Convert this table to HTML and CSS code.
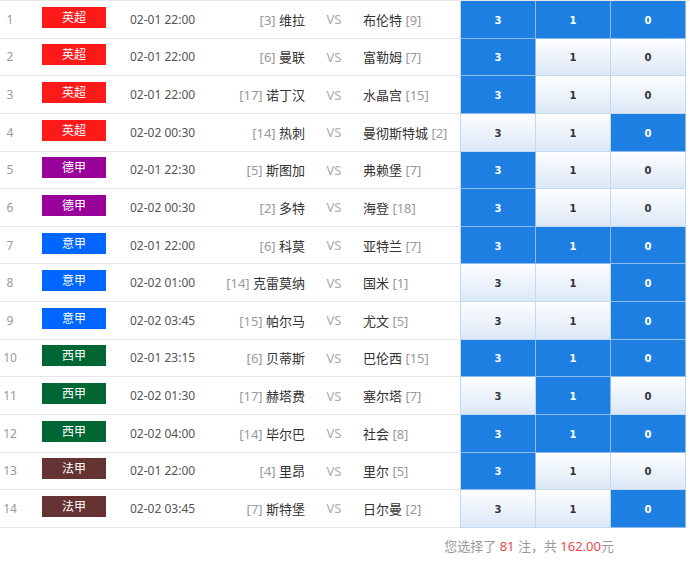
FILE: index.html
```html
<!DOCTYPE html>
<html lang="zh">
<head>
<meta charset="utf-8">
<title>选择</title>
<link rel="stylesheet" href="styles.css">
</head>
<body>
<div class="list">
  <div class="row"><div class="info"><span class="idx">1</span><span class="lg"><span class="badge yc">英超</span></span><span class="time">02-01 22:00</span><span class="home"><em>[3]</em> 维拉</span><span class="vs">VS</span><span class="away">布伦特 <em>[9]</em></span></div><div class="odds"><span class="c on">3</span><span class="c on">1</span><span class="c on">0</span></div></div>
  <div class="row"><div class="info"><span class="idx">2</span><span class="lg"><span class="badge yc">英超</span></span><span class="time">02-01 22:00</span><span class="home"><em>[6]</em> 曼联</span><span class="vs">VS</span><span class="away">富勒姆 <em>[7]</em></span></div><div class="odds"><span class="c on">3</span><span class="c">1</span><span class="c">0</span></div></div>
  <div class="row"><div class="info"><span class="idx">3</span><span class="lg"><span class="badge yc">英超</span></span><span class="time">02-01 22:00</span><span class="home"><em>[17]</em> 诺丁汉</span><span class="vs">VS</span><span class="away">水晶宫 <em>[15]</em></span></div><div class="odds"><span class="c on">3</span><span class="c">1</span><span class="c">0</span></div></div>
  <div class="row"><div class="info"><span class="idx">4</span><span class="lg"><span class="badge yc">英超</span></span><span class="time">02-02 00:30</span><span class="home"><em>[14]</em> 热刺</span><span class="vs">VS</span><span class="away">曼彻斯特城 <em>[2]</em></span></div><div class="odds"><span class="c">3</span><span class="c">1</span><span class="c on">0</span></div></div>
  <div class="row"><div class="info"><span class="idx">5</span><span class="lg"><span class="badge dj">德甲</span></span><span class="time">02-01 22:30</span><span class="home"><em>[5]</em> 斯图加</span><span class="vs">VS</span><span class="away">弗赖堡 <em>[7]</em></span></div><div class="odds"><span class="c on">3</span><span class="c">1</span><span class="c">0</span></div></div>
  <div class="row"><div class="info"><span class="idx">6</span><span class="lg"><span class="badge dj">德甲</span></span><span class="time">02-02 00:30</span><span class="home"><em>[2]</em> 多特</span><span class="vs">VS</span><span class="away">海登 <em>[18]</em></span></div><div class="odds"><span class="c on">3</span><span class="c">1</span><span class="c">0</span></div></div>
  <div class="row"><div class="info"><span class="idx">7</span><span class="lg"><span class="badge ij">意甲</span></span><span class="time">02-01 22:00</span><span class="home"><em>[6]</em> 科莫</span><span class="vs">VS</span><span class="away">亚特兰 <em>[7]</em></span></div><div class="odds"><span class="c on">3</span><span class="c on">1</span><span class="c on">0</span></div></div>
  <div class="row"><div class="info"><span class="idx">8</span><span class="lg"><span class="badge ij">意甲</span></span><span class="time">02-02 01:00</span><span class="home"><em>[14]</em> 克雷莫纳</span><span class="vs">VS</span><span class="away">国米 <em>[1]</em></span></div><div class="odds"><span class="c">3</span><span class="c">1</span><span class="c on">0</span></div></div>
  <div class="row"><div class="info"><span class="idx">9</span><span class="lg"><span class="badge ij">意甲</span></span><span class="time">02-02 03:45</span><span class="home"><em>[15]</em> 帕尔马</span><span class="vs">VS</span><span class="away">尤文 <em>[5]</em></span></div><div class="odds"><span class="c">3</span><span class="c">1</span><span class="c on">0</span></div></div>
  <div class="row"><div class="info"><span class="idx">10</span><span class="lg"><span class="badge xj">西甲</span></span><span class="time">02-01 23:15</span><span class="home"><em>[6]</em> 贝蒂斯</span><span class="vs">VS</span><span class="away">巴伦西 <em>[15]</em></span></div><div class="odds"><span class="c on">3</span><span class="c on">1</span><span class="c on">0</span></div></div>
  <div class="row"><div class="info"><span class="idx">11</span><span class="lg"><span class="badge xj">西甲</span></span><span class="time">02-02 01:30</span><span class="home"><em>[17]</em> 赫塔费</span><span class="vs">VS</span><span class="away">塞尔塔 <em>[7]</em></span></div><div class="odds"><span class="c">3</span><span class="c on">1</span><span class="c">0</span></div></div>
  <div class="row"><div class="info"><span class="idx">12</span><span class="lg"><span class="badge xj">西甲</span></span><span class="time">02-02 04:00</span><span class="home"><em>[14]</em> 毕尔巴</span><span class="vs">VS</span><span class="away">社会 <em>[8]</em></span></div><div class="odds"><span class="c on">3</span><span class="c on">1</span><span class="c on">0</span></div></div>
  <div class="row"><div class="info"><span class="idx">13</span><span class="lg"><span class="badge fj">法甲</span></span><span class="time">02-01 22:00</span><span class="home"><em>[4]</em> 里昂</span><span class="vs">VS</span><span class="away">里尔 <em>[5]</em></span></div><div class="odds"><span class="c on">3</span><span class="c">1</span><span class="c">0</span></div></div>
  <div class="row"><div class="info"><span class="idx">14</span><span class="lg"><span class="badge fj">法甲</span></span><span class="time">02-02 03:45</span><span class="home"><em>[7]</em> 斯特堡</span><span class="vs">VS</span><span class="away">日尔曼 <em>[2]</em></span></div><div class="odds"><span class="c">3</span><span class="c">1</span><span class="c on">0</span></div></div>
</div>
<div class="footer">您选择了 <b>81</b> 注，共 <b>162.00</b>元</div>
</body>
</html>
```
FILE: styles.css
```css
html, body {
  margin: 0;
  padding: 0;
  background: #fff;
}
body {
  font-family: "Noto Sans", "Noto Sans CJK SC", sans-serif;
  color: #333;
  width: 690px;
}
.list {
  border-top: 1px solid #e8e8e8;
}
.row {
  display: flex;
  height: 37.64px;
}
.info {
  flex: 0 0 460px;
  display: flex;
  align-items: center;
  border-bottom: 1px solid #e6e6e6;
  box-sizing: border-box;
  font-size: 13px;
}
.idx {
  width: 20px;
  text-align: center;
  color: #999;
  font-size: 12px;
}
.lg {
  width: 108px;
  display: flex;
  justify-content: center;
}
.badge {
  width: 64px;
  height: 21px;
  line-height: 20px;
  margin-bottom: 4px;
  text-align: center;
  color: #fff;
  font-size: 12px;
  font-family: "Noto Sans CJK SC", sans-serif;
}
.yc { background: #ff1a1a; }
.dj { background: #990099; }
.ij { background: #0066ff; }
.xj { background: #006633; }
.fj { background: #663333; }
.time {
  width: 80px;
  padding-left: 2px;
  font-size: 12px;
  color: #555;
}
.home {
  width: 95px;
  text-align: right;
  white-space: nowrap;
}
.away {
  width: 97px;
  white-space: nowrap;
}
.home em, .away em {
  font-style: normal;
  color: #999;
}
.vs {
  width: 58px;
  text-align: center;
  color: #aaa;
}
.odds {
  display: flex;
  border-left: 1px solid #c3d8f1;
}
.c {
  width: 75px;
  box-sizing: border-box;
  border-right: 1px solid #c3d8f1;
  border-bottom: 1px solid #c3d8f1;
  display: flex;
  align-items: center;
  justify-content: center;
  font-family: "DejaVu Sans", sans-serif;
  font-weight: bold;
  font-size: 10px;
  color: #333;
  padding-top: 2px;
  background: linear-gradient(#fdfeff, #dce8f7);
}
.c.on {
  background: #1e7fe2;
  color: #fff;
  border-right-color: #8fbaec;
  border-bottom-color: #8fbaec;
}
.footer {
  height: 36px;
  line-height: 36px;
  text-align: right;
  padding-right: 76px;
  font-size: 13px;
  color: #999;
}
.footer b {
  font-weight: normal;
  color: #e84a4a;
}
```
